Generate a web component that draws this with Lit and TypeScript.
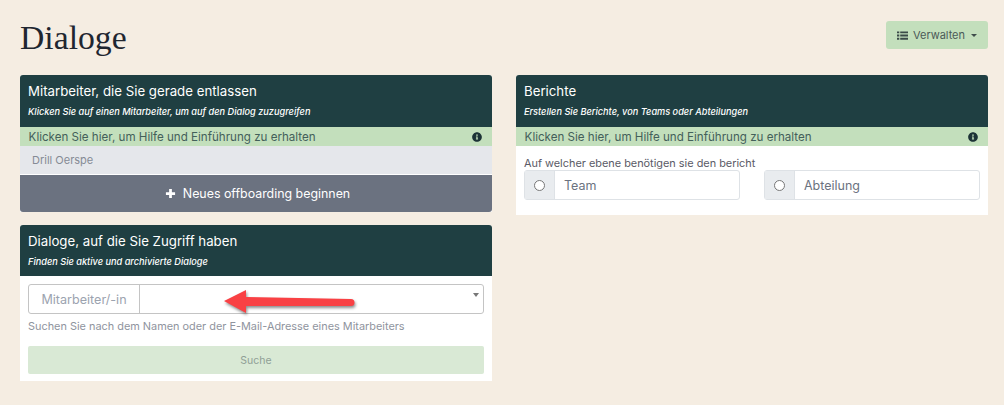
import { LitElement, html, css } from "lit";
import { customElement } from "lit/decorators.js";

const info = html`<svg class="info" viewBox="0 0 512 512"><path fill="currentColor" d="M256 8C119 8 8 119 8 256s111 248 248 248 248-111 248-248S393 8 256 8zm0 110c23.200 0 42 18.800 42 42s-18.800 42-42 42-42-18.800-42-42 18.800-42 42-42zm56 254c0 6.600-5.400 12-12 12h-88c-6.600 0-12-5.400-12-12v-24c0-6.600 5.400-12 12-12h12v-64h-12c-6.600 0-12-5.400-12-12v-24c0-6.600 5.400-12 12-12h64c6.600 0 12 5.400 12 12v100h12c6.600 0 12 5.400 12 12v24z"/></svg>`;

@customElement("app-root")
export class AppRoot extends LitElement {
  static styles = css`
    :host { display: block; height: 405px; background: #f5ede2; font-family: Inter, "Liberation Sans", sans-serif; color: #6b7280; overflow: hidden; }
    .page { display: grid; grid-template-columns: 472px 472px; column-gap: 24px; padding: 0 16px 0 20px; }
    .top { grid-column: 1 / 3; display: flex; justify-content: space-between; align-items: flex-start; height: 75px; }
    h1 { margin: 18px 0 0; font: 400 33.700px/40px "Liberation Serif", serif; color: #1f2630; }
    .manage { margin-top: 21px; height: 28px; width: 102px; box-sizing: border-box; display: flex; align-items: center; justify-content: center; gap: 5px; background: #c3dfbc; border-radius: 3px; font-size: 11px; color: #4b5a58; }
    .manage svg { width: 11px; height: 11px; }
    .caret { width: 0; height: 0; border: 3px solid transparent; border-top-color: #3f4d4b; border-bottom: 0; margin-left: 1px; }
    .col { display: flex; flex-direction: column; gap: 13px; }
    .card { background: #fff; border-radius: 3px 3px 0 0; }
    .head { background: #1f3f42; color: #fff; height: 51px; box-sizing: border-box; padding: 7px 8px 0; border-radius: 3px 3px 0 0; }
    .head h2 { margin: 0; font-size: 13.250px; font-weight: 400; line-height: 19px; }
    .head p { margin: 4px 0 0; font-size: 9.200px; font-style: italic; font-weight: 500; line-height: 13px; }
    .help { height: 19px; border-top: 1px solid #1f3f42; background: #c3dfbc; display: flex; align-items: center; justify-content: space-between; padding: 0 10.500px 0 8.600px; font-size: 11.600px; color: #44605a; }
    .info { width: 10px; height: 10px; color: #1c3336; }
    .person { height: 28px; background: #e5e7eb; padding: 0 0 0 12px; display: flex; align-items: center; font-size: 11px; color: #858b95; }
    .new { margin-top: 1px; height: 37px; box-sizing: border-box; padding-left: 3px; background: #6b7280; color: #fff; display: flex; align-items: center; justify-content: center; gap: 7px; font-size: 12.400px; border-radius: 0 0 3px 3px; }
    .new svg { width: 11px; height: 11px; }
    .body { padding: 8px 8px 7px; }
    .search { position: relative; display: flex; height: 30px; box-sizing: border-box; border: 1px solid #c4c4c4; border-radius: 3px; }
    .addon { width: 111px; box-sizing: border-box; border-right: 1px solid #c4c4c4; display: flex; align-items: center; justify-content: center; font-size: 12.600px; color: #9ca3af; }
    .select { flex: 1; position: relative; }
    .select::after { content: ""; position: absolute; right: 4px; top: 8px; border: 3px solid transparent; border-top: 4px solid #777; border-bottom: 0; }
    .arrow { position: absolute; left: 195px; top: 5px; width: 131px; height: 23px; overflow: visible; filter: drop-shadow(1px 2px 1.500px rgba(0,0,0,.45)); }
    .hint { margin-top: 5px; font-size: 10.900px; line-height: 14px; color: #8f949e; }
    .submit { margin-top: 13px; height: 28px; background: #d9e9d5; border-radius: 2px; display: flex; align-items: center; justify-content: center; font-size: 10.500px; color: #909f96; }
    .body.rep { padding: 10px 8px 15px; }
    .q { font-size: 10.900px; line-height: 14px; color: #5a5a66; }
    .radios { display: grid; grid-template-columns: 216px 216px; column-gap: 24px; }
    .radio { display: flex; height: 30px; box-sizing: border-box; border: 1px solid #dee2e6; border-radius: 3px; font-size: 12.500px; color: #6b7280; align-items: stretch; }
    .mark { width: 29px; background: #e9ecef; border-right: 1px solid #dee2e6; display: flex; align-items: center; justify-content: center; }
    .mark i { width: 9px; height: 9px; border: 1px solid #777; border-radius: 50%; background: #fff; }
    .label { display: flex; align-items: center; padding-left: 9px; }
  `;

  render() {
    return html`<div class="page">
      <div class="top">
        <h1>Dialoge</h1>
        <div class="manage">
          <svg viewBox="0 0 12 12"><path fill="#3b4a48" d="M0 1.500h2.500v2H0zM3.500 1.500H12v2H3.500zM0 5h2.500v2H0zM3.500 5H12v2H3.500zM0 8.500h2.500v2H0zM3.500 8.500H12v2H3.500z"/></svg>
          <span>Verwalten</span><span class="caret"></span>
        </div>
      </div>
      <div class="col">
        <section class="card">
          <div class="head"><h2>Mitarbeiter, die Sie gerade entlassen</h2><p>Klicken Sie auf einen Mitarbeiter, um auf den Dialog zuzugreifen</p></div>
          <div class="help"><span>Klicken Sie hier, um Hilfe und Einführung zu erhalten</span>${info}</div>
          <div class="person">Drill Oerspe</div>
          <div class="new"><svg viewBox="0 0 12 12"><path fill="#fff" d="M4.500 1h3v3.500H11v3H7.500V11h-3V7.500H1v-3h3.500z"/></svg>Neues offboarding beginnen</div>
        </section>
        <section class="card">
          <div class="head"><h2>Dialoge, auf die Sie Zugriff haben</h2><p>Finden Sie aktive und archivierte Dialoge</p></div>
          <div class="body">
            <div class="search">
              <div class="addon">Mitarbeiter/-in</div>
              <div class="select"></div>
              <svg class="arrow" viewBox="0 0 131 23"><path fill="#f94144" d="M0 11 L22 0 L22 7 L127 9 A3.500 3.500 0 0 1 127 16 L22 16 L22 23 Z"/></svg>
            </div>
            <div class="hint">Suchen Sie nach dem Namen oder der E-Mail-Adresse eines Mitarbeiters</div>
            <div class="submit">Suche</div>
          </div>
        </section>
      </div>
      <div class="col">
        <section class="card">
          <div class="head"><h2>Berichte</h2><p>Erstellen Sie Berichte, von Teams oder Abteilungen</p></div>
          <div class="help"><span>Klicken Sie hier, um Hilfe und Einführung zu erhalten</span>${info}</div>
          <div class="body rep">
            <div class="q">Auf welcher ebene benötigen sie den bericht</div>
            <div class="radios">
              <div class="radio"><div class="mark"><i></i></div><div class="label">Team</div></div>
              <div class="radio"><div class="mark"><i></i></div><div class="label">Abteilung</div></div>
            </div>
          </div>
        </section>
      </div>
    </div>`;
  }
}
